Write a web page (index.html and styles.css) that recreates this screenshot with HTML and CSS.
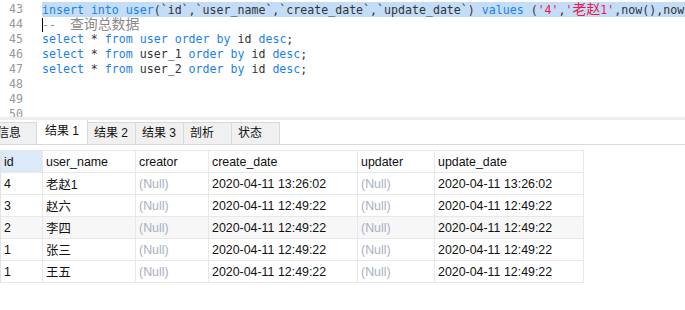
FILE: index.html
```html
<!DOCTYPE html>
<html lang="zh">
<head>
    <meta charset="UTF-8">
    <title>query</title>
    <link rel="stylesheet" href="styles.css">
</head>
<body>
    <div class="editor">
        <div class="gutter">
            <div class="num">43</div>
            <div class="num">44</div>
            <div class="num">45</div>
            <div class="num">46</div>
            <div class="num">47</div>
            <div class="num">48</div>
            <div class="num">49</div>
            <div class="num">50</div>
        </div>
        <div class="code">
            <div class="line selected"><span class="kw">insert</span> <span class="kw">into</span> <span class="kw">user</span>(`id`,`user_name`,`create_date`,`update_date`) <span class="kw">values</span> (<span class="str">'4'</span>,<span class="str">'<span class="wide">老赵</span>1'</span>,now(),now(),now(),now())</div>
            <div class="line"><span class="caret"></span><span class="cmt">--  <span class="wide">查询总数据</span></span></div>
            <div class="line"><span class="kw">select</span> * <span class="kw">from</span> <span class="kw">user</span> <span class="kw">order</span> <span class="kw">by</span> id <span class="kw">desc</span>;</div>
            <div class="line"><span class="kw">select</span> * <span class="kw">from</span> user_1 <span class="kw">order</span> <span class="kw">by</span> id <span class="kw">desc</span>;</div>
            <div class="line"><span class="kw">select</span> * <span class="kw">from</span> user_2 <span class="kw">order</span> <span class="kw">by</span> id <span class="kw">desc</span>;</div>
            <div class="line"></div>
            <div class="line"></div>
            <div class="line"></div>
        </div>
    </div>
    <div class="splitter"></div>

    <div class="tabs">
        <div class="tab first">信息</div>
        <div class="tab active">结果 1</div>
        <div class="tab">结果 2</div>
        <div class="tab">结果 3</div>
        <div class="tab">剖析</div>
        <div class="tab">状态</div>
    </div>

    <table class="grid">
        <tr>
            <th class="c-id sel">id</th>
            <th class="c-name">user_name</th>
            <th class="c-creator">creator</th>
            <th class="c-date">create_date</th>
            <th class="c-updater">updater</th>
            <th class="c-date">update_date</th>
        </tr>
        <tr>
            <td>4</td><td>老赵1</td><td class="null">(Null)</td><td>2020-04-11 13:26:02</td><td class="null">(Null)</td><td>2020-04-11 13:26:02</td>
        </tr>
        <tr>
            <td>3</td><td>赵六</td><td class="null">(Null)</td><td>2020-04-11 12:49:22</td><td class="null">(Null)</td><td>2020-04-11 12:49:22</td>
        </tr>
        <tr class="alt">
            <td>2</td><td>李四</td><td class="null">(Null)</td><td>2020-04-11 12:49:22</td><td class="null">(Null)</td><td>2020-04-11 12:49:22</td>
        </tr>
        <tr>
            <td>1</td><td>张三</td><td class="null">(Null)</td><td>2020-04-11 12:49:22</td><td class="null">(Null)</td><td>2020-04-11 12:49:22</td>
        </tr>
        <tr>
            <td>1</td><td>王五</td><td class="null">(Null)</td><td>2020-04-11 12:49:22</td><td class="null">(Null)</td><td>2020-04-11 12:49:22</td>
        </tr>
    </table>
</body>
</html>
```

FILE: styles.css
```css
* {
    margin: 0;
    padding: 0;
    box-sizing: border-box;
}

body {
    width: 685px;
    height: 310px;
    overflow: hidden;
    background-color: white;
    font-family: "Liberation Sans", "Noto Sans CJK SC", sans-serif;
    font-size: 12px;
    color: #111;
}

/* sql editor */

.editor {
    display: flex;
    height: 117px;
    padding-top: 2px;
    overflow: hidden;
    font-family: "DejaVu Sans Mono", "Noto Sans CJK SC", monospace;
    font-size: 11.6px;
}

.gutter {
    width: 42px;
    flex-shrink: 0;
    padding-right: 19px;
    text-align: right;
    color: #999;
}

.num {
    height: 15px;
    line-height: 15px;
}

.code {
    flex: 1;
    min-width: 0;
    color: #333;
}

.line {
    height: 15px;
    line-height: 15px;
    white-space: pre;
    overflow: hidden;
}

.selected {
    background-color: #c3ddf7;
}

.caret {
    display: inline-block;
    width: 1px;
    height: 14px;
    margin-right: -1px;
    vertical-align: -3px;
    background-color: #000;
}

.wide {
    font-size: 13.9px;
    line-height: 14px;
}

.kw {
    color: #1a7ff0;
}

.str {
    color: #f0174d;
}

.cmt {
    color: #8a8a8a;
}

.splitter {
    height: 3px;
    background-color: #eeeeee;
}

/* result tabs */

.tabs {
    display: flex;
    align-items: flex-end;
    height: 25px;
    margin-bottom: 5px;
    border-bottom: 1px solid #dadada;
    overflow: hidden;
}

.tab {
    height: 22px;
    min-width: 48px;
    padding: 0 6px;
    line-height: 21px;
    font-size: 12px;
    background-color: #f0f0f0;
    border: 1px solid #d9d9d9;
    border-bottom: none;
    border-left: none;
    color: #111;
}

.first {
    margin-left: -11px;
    padding-left: 8px;
}

.active {
    width: 51px;
    height: 26px;
    padding-left: 8px;
    line-height: 23px;
    margin-bottom: -1px;
    background-color: white;
}

/* result grid */

.grid {
    border-collapse: collapse;
    table-layout: fixed;
    font-size: 12.4px;
}

.grid th,
.grid td {
    height: 22px;
    padding: 0 3px;
    text-align: left;
    font-weight: normal;
    white-space: nowrap;
    border: 1px solid #e8e8e8;
    border-left: none;
}

.grid td:first-child,
.grid th:first-child {
    border-left: 1px solid #e2e2e2;
}

.c-id {
    width: 42px;
}

.c-name {
    width: 93px;
}

.c-creator {
    width: 73px;
}

.c-date {
    width: 149px;
}

.c-updater {
    width: 77px;
}

.sel {
    background-color: #dbe9f8;
}

.alt td {
    background-color: #f7f7f7;
}

.null {
    color: #a9b1c2;
}
```
